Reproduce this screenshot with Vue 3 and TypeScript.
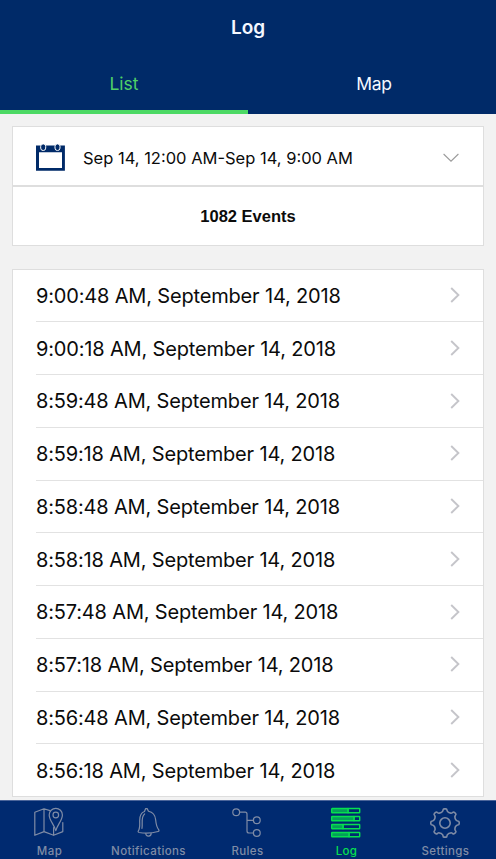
<script setup lang="ts">
import { ref } from 'vue'

type TabName = 'Map' | 'Notifications' | 'Rules' | 'Log' | 'Settings'

const views = ['List', 'Map']
const activeView = ref('List')
const tabs: TabName[] = ['Map', 'Notifications', 'Rules', 'Log', 'Settings']
const activeTab = ref<TabName>('Log')

const times = [
  '9:00:48', '9:00:18', '8:59:48', '8:59:18', '8:58:48',
  '8:58:18', '8:57:48', '8:57:18', '8:56:48', '8:56:18',
]
const events = times.map((t) => `${t} AM, September 14, 2018`)

const logBars = [
  { y: 1.5, fill: 17 },
  { y: 9.5, fill: 23 },
  { y: 17.5, fill: 12 },
  { y: 25.5, fill: 18 },
]

// Eight-toothed gear outline centred on (16, 16).
function gearPath(): string {
  const pt = (r: number, deg: number): string => {
    const a = (deg * Math.PI) / 180
    return `${(16 + r * Math.sin(a)).toFixed(2)} ${(16 - r * Math.cos(a)).toFixed(2)}`
  }
  let d = ''
  for (let i = 0; i < 8; i++) {
    const a = i * 45
    d += `${i ? 'L' : 'M'}${pt(12.8, a - 9)}Q${pt(14.2, a - 8)} ${pt(14.2, a - 4)}L${pt(14.2, a + 4)}Q${pt(14.2, a + 8)} ${pt(12.8, a + 9)}`
    d += `Q${pt(11.4, a + 12)} ${pt(11.4, a + 16)}Q${pt(10.8, a + 22.5)} ${pt(11.4, a + 29)}Q${pt(11.4, a + 33)} ${pt(12.8, a + 36)}`
  }
  return d + 'Z'
}
const gear = gearPath()
</script>

<template>
  <div class="screen">
    <header class="header">
      <h1 class="title">Log</h1>
      <nav class="views">
        <button
          v-for="v in views"
          :key="v"
          class="view"
          :class="{ active: v === activeView }"
          @click="activeView = v"
        >{{ v }}</button>
      </nav>
    </header>

    <main class="content">
      <section class="card filter">
        <div class="range">
          <svg class="calendar" width="30" height="28" viewBox="0 0 30 28">
            <path d="M0 2.6H28.9V27.8H0ZM3 9.2V25H26V9.2Z" fill="#002a68" fill-rule="evenodd" />
            <rect x="4.7" y=".9" width="5" height="6.6" rx="2.4" fill="#002a68" stroke="#fff" stroke-width="1" />
            <rect x="19" y=".9" width="5" height="6.6" rx="2.4" fill="#002a68" stroke="#fff" stroke-width="1" />
          </svg>
          <span class="range-text">Sep 14, 12:00 AM-Sep 14, 9:00 AM</span>
          <svg class="down" width="16" height="10" viewBox="0 0 16 10">
            <path d="M.6 1L8 8.2L15.4 1" fill="none" stroke="#9b9b9b" stroke-width="1.1" />
          </svg>
        </div>
        <div class="count"><span>1082 Events</span></div>
      </section>

      <section class="card list">
        <div v-for="e in events" :key="e" class="row">
          <span class="row-text">{{ e }}</span>
          <svg class="chevron" width="10" height="16" viewBox="0 0 10 16">
            <path d="M1.2 1L8.4 8L1.2 15" fill="none" stroke="#c5c5ca" stroke-width="1.9" />
          </svg>
        </div>
      </section>
    </main>

    <nav class="tabbar">
      <button
        v-for="t in tabs"
        :key="t"
        class="tab"
        :class="{ active: t === activeTab }"
        @click="activeTab = t"
      >
        <svg class="icon" width="32" height="32" viewBox="0 0 32 32" fill="none" stroke="currentColor" stroke-width="1.2" stroke-linejoin="round" stroke-linecap="round">
          <template v-if="t === 'Map'">
            <path d="M17 3.6L11 1.8L1.8 5.2V28.3L11 24.6L20.6 28.3L29.8 24.6V15.5M11 1.8V24.6M20.6 28.3V20.5" />
            <path d="M22.8 23.6C21 17.5 16.2 13 16.2 7.9A6.6 6.6 0 0 1 29.4 7.9C29.4 13 24.6 17.5 22.8 23.6Z" />
            <circle cx="22.8" cy="8" r="2.8" />
          </template>
          <template v-else-if="t === 'Notifications'">
            <g transform="rotate(-3 16 16)">
              <path d="M13.1 4.3L14.3 1.6H15.9L17.1 4.3C21.8 5.4 23.6 9 23.8 13.2C24 18 24.4 20.6 26.3 23.2C26.9 24.1 26.6 24.8 25.6 25Q16 27.2 6.6 25C5.6 24.7 5.4 24.2 6 23.2C8 20.5 7.6 17.5 7.8 13.2C8 8.6 9.4 5.3 13.1 4.3Z" />
              <path d="M13.2 26.4A2.7 2.7 0 0 0 18.6 26.4M9.7 21C10.9 16.5 8.9 9.5 13.1 6.8" />
            </g>
          </template>
          <template v-else-if="t === 'Rules'">
            <circle cx="5.2" cy="5.2" r="3.4" /><circle cx="25.8" cy="13.3" r="3.4" /><circle cx="25.8" cy="26" r="3.4" />
            <path d="M8.6 5.2H14.2Q16 5.2 16 7.2V24Q16 26 18 26H22.4M16 13.3H22.4" />
          </template>
          <template v-else-if="t === 'Log'">
            <g v-for="b in logBars" :key="b.y">
              <rect x="1.7" :y="b.y" width="28" height="4.2" rx="0.5" stroke-width="1.4" />
              <rect x="2" :y="b.y" :width="b.fill" height="4.2" fill="currentColor" fill-opacity="0.65" stroke="none" />
              <path :d="`M${b.fill + 1} ${b.y}v4.2`" stroke-width="1.4" />
            </g>
          </template>
          <template v-else>
            <path :d="gear" stroke-width="1.6" />
            <circle cx="16" cy="16" r="5.2" stroke-width="1.6" />
          </template>
        </svg>
        <span class="label">{{ t }}</span>
      </button>
    </nav>
  </div>
</template>

<style>
body {
  margin: 0;
}
</style>

<style scoped>
.screen {
  display: flex;
  flex-direction: column;
  height: 859px;
  overflow: hidden;
  background: #f2f2f2;
  font-family: Inter, "Liberation Sans", sans-serif;
  color: #0b0b0b;
}
button {
  margin: 0;
  padding: 0;
  border: 0;
  background: none;
  font: inherit;
  color: inherit;
}
.header {
  display: flex;
  flex-direction: column;
  height: 114.4px;
  background: #002a68;
  color: #f5f8ff;
}
.title {
  margin: 0;
  height: 55px;
  line-height: 55px;
  text-align: center;
  font-size: 19px;
  font-weight: 600;
}
.views {
  display: flex;
  flex: 1;
}
.view {
  width: 50%;
  box-sizing: border-box;
  padding-top: 2px;
  border-bottom: 4px solid transparent;
  font-size: 17.5px;
}
.view:last-child {
  padding-left: 4px;
  letter-spacing: -0.3px;
}
.view.active {
  color: #4fd267;
  border-color: #4cd964;
}
.content {
  display: flex;
  flex-direction: column;
  gap: 23px;
  flex: 1;
  padding: 11.6px 12px 0;
}
.card {
  box-sizing: border-box;
  border: 1px solid #dedede;
  background: #fff;
}
.filter {
  height: 120px;
  display: flex;
  flex-direction: column;
}
.range {
  display: flex;
  align-items: center;
  height: 58px;
  padding: 0 24px 0 23px;
  border-bottom: 2px solid #dedede;
}
.range-text {
  flex: 1;
  margin-left: 17px;
  padding-top: 4px;
  font-size: 16.5px;
  white-space: nowrap;
}
.calendar {
  margin-top: 3px;
}
.down {
  margin-top: 4px;
}
.count {
  display: flex;
  flex: 1;
  align-items: center;
  justify-content: center;
  padding-top: 1px;
  font: bold 16.5px "Liberation Sans", sans-serif;
}
.list {
  height: 528px;
  padding-left: 23px;
}
.row {
  box-sizing: border-box;
  display: flex;
  align-items: center;
  justify-content: space-between;
  height: 52.75px;
  padding-right: 23px;
  border-bottom: 1px solid #e2e2e2;
}
.row:first-child {
  height: 52.3px;
}
.row:last-child {
  border-bottom: 0;
}
.row-text {
  padding-top: 0.7px;
  font-size: 20px;
  letter-spacing: -0.17px;
  white-space: nowrap;
}
.chevron {
  margin-top: -0.5px;
}
.tabbar {
  display: flex;
  box-sizing: border-box;
  height: 59px;
  padding-right: 1px;
  border-top: 1px solid #4b659a;
  background: #002a70;
}
.tab {
  display: flex;
  flex: 1;
  flex-direction: column;
  align-items: center;
  padding-top: 6px;
  color: #7f8ca6;
}
.tab.active {
  color: #06e04f;
}
.icon {
  flex: none;
  margin-left: -1.6px;
}
.label {
  margin-top: 5px;
  font-size: 11.5px;
  line-height: 15px;
  font-weight: 500;
  letter-spacing: 0.38px;
}
</style>
